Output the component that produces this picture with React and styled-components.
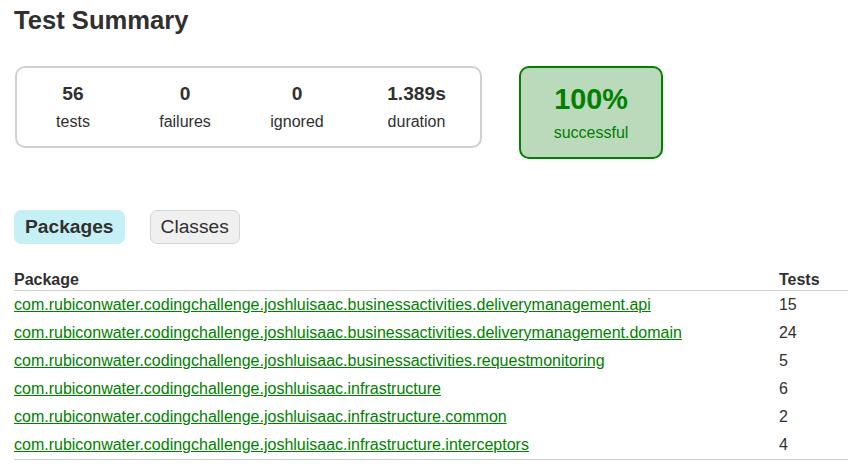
import styled, { createGlobalStyle } from "styled-components";

const GlobalStyle = createGlobalStyle`
  html, body {
    margin: 0;
    padding: 0;
    overflow: hidden;
  }

  body {
    font-family: "Liberation Sans", Arial, sans-serif;
    font-size: 16px;
    color: #303030;
    background: #fff;
  }
`;

const Content = styled.div`
  padding: 6px 0 0 14px;
`;

const Title = styled.h1`
  margin: 0;
  font-size: 25.6px;
  font-weight: bold;
  white-space: nowrap;
`;

const Summary = styled.div`
  display: flex;
  align-items: flex-start;
  margin: 31px 0 0 1px;
`;

const SummaryGroup = styled.div`
  display: flex;
  gap: 2px;
  padding: 0 1px;
  border: solid 2px #d0d0d0;
  border-radius: 10px;
`;

const InfoBox = styled.div`
  width: ${(p) => (p.$wide ? "125px" : "110px")};
  padding: 15px 0;
  text-align: center;

  p {
    margin: 0;
  }
`;

const Counter = styled.p`
  font-size: 19.2px;
  font-weight: bold;
  margin-bottom: 8px !important;
`;

const SuccessRate = styled.div`
  width: 140px;
  margin-left: 37px;
  padding: 15px 0;
  text-align: center;
  color: #008000;
  background-color: #bbd9bb;
  border: solid 2px #008000;
  border-radius: 10px;

  p {
    margin: 0;
  }
`;

const Percent = styled.p`
  font-size: 28.8px;
  font-weight: bold;
  margin-bottom: 8px !important;
`;

const TabLinks = styled.ul`
  display: flex;
  list-style: none;
  margin: 51px 0 0;
  padding: 0;
`;

const Tab = styled.li`
  padding: 5px 10px;
  margin-right: 25px;
  border: solid 1px ${(p) => (p.$selected ? "#c5f0f5" : "#d4d4d4")};
  border-radius: 7px;
  background-color: ${(p) => (p.$selected ? "#c5f0f5" : "#f0f0f0")};

  a {
    display: block;
    font-size: 19.2px;
    font-weight: ${(p) => (p.$selected ? "bold" : "normal")};
    color: #303030;
    text-decoration: none;
  }
`;

const Table = styled.table`
  width: 100%;
  margin-top: 26px;
  border-collapse: collapse;
  border-bottom: solid #d0d0d0 1px;
  white-space: nowrap;

  th {
    text-align: left;
    padding: 1px 1px 1px 6em;
    border-bottom: solid #d0d0d0 1px;
  }

  td {
    padding: 5px 1px 5px 6em;
  }

  th:first-child,
  td:first-child {
    padding-left: 0;
  }

  th:last-child,
  td:last-child {
    width: 100%;
    padding-left: 0;
  }
`;

const PackageLink = styled.a`
  color: #008000;
  text-decoration: underline;
`;

const base = "com.rubiconwater.codingchallenge.joshluisaac";

const packages = [
  { name: `${base}.businessactivities.deliverymanagement.api`, tests: 15 },
  { name: `${base}.businessactivities.deliverymanagement.domain`, tests: 24 },
  { name: `${base}.businessactivities.requestmonitoring`, tests: 5 },
  { name: `${base}.infrastructure`, tests: 6 },
  { name: `${base}.infrastructure.common`, tests: 2 },
  { name: `${base}.infrastructure.interceptors`, tests: 4 },
];

const stats = [
  { value: "56", label: "tests" },
  { value: "0", label: "failures" },
  { value: "0", label: "ignored" },
  { value: "1.389s", label: "duration", wide: true },
];

const App = () => {
  return (
    <>
      <GlobalStyle />
      <Content>
        <Title>Test Summary</Title>
        <Summary>
          <SummaryGroup>
            {stats.map((s) => (
              <InfoBox key={s.label} $wide={s.wide}>
                <Counter>{s.value}</Counter>
                <p>{s.label}</p>
              </InfoBox>
            ))}
          </SummaryGroup>
          <SuccessRate>
            <Percent>100%</Percent>
            <p>successful</p>
          </SuccessRate>
        </Summary>

        <TabLinks>
          <Tab $selected>
            <a href="#tab0">Packages</a>
          </Tab>
          <Tab>
            <a href="#tab1">Classes</a>
          </Tab>
        </TabLinks>

        <Table>
          <thead>
            <tr>
              <th>Package</th>
              <th>Tests</th>
              <th />
            </tr>
          </thead>
          <tbody>
            {packages.map((p) => (
              <tr key={p.name}>
                <td>
                  <PackageLink href={`#${p.name}`}>{p.name}</PackageLink>
                </td>
                <td>{p.tests}</td>
                <td />
              </tr>
            ))}
          </tbody>
        </Table>
      </Content>
    </>
  );
};

export default App;
